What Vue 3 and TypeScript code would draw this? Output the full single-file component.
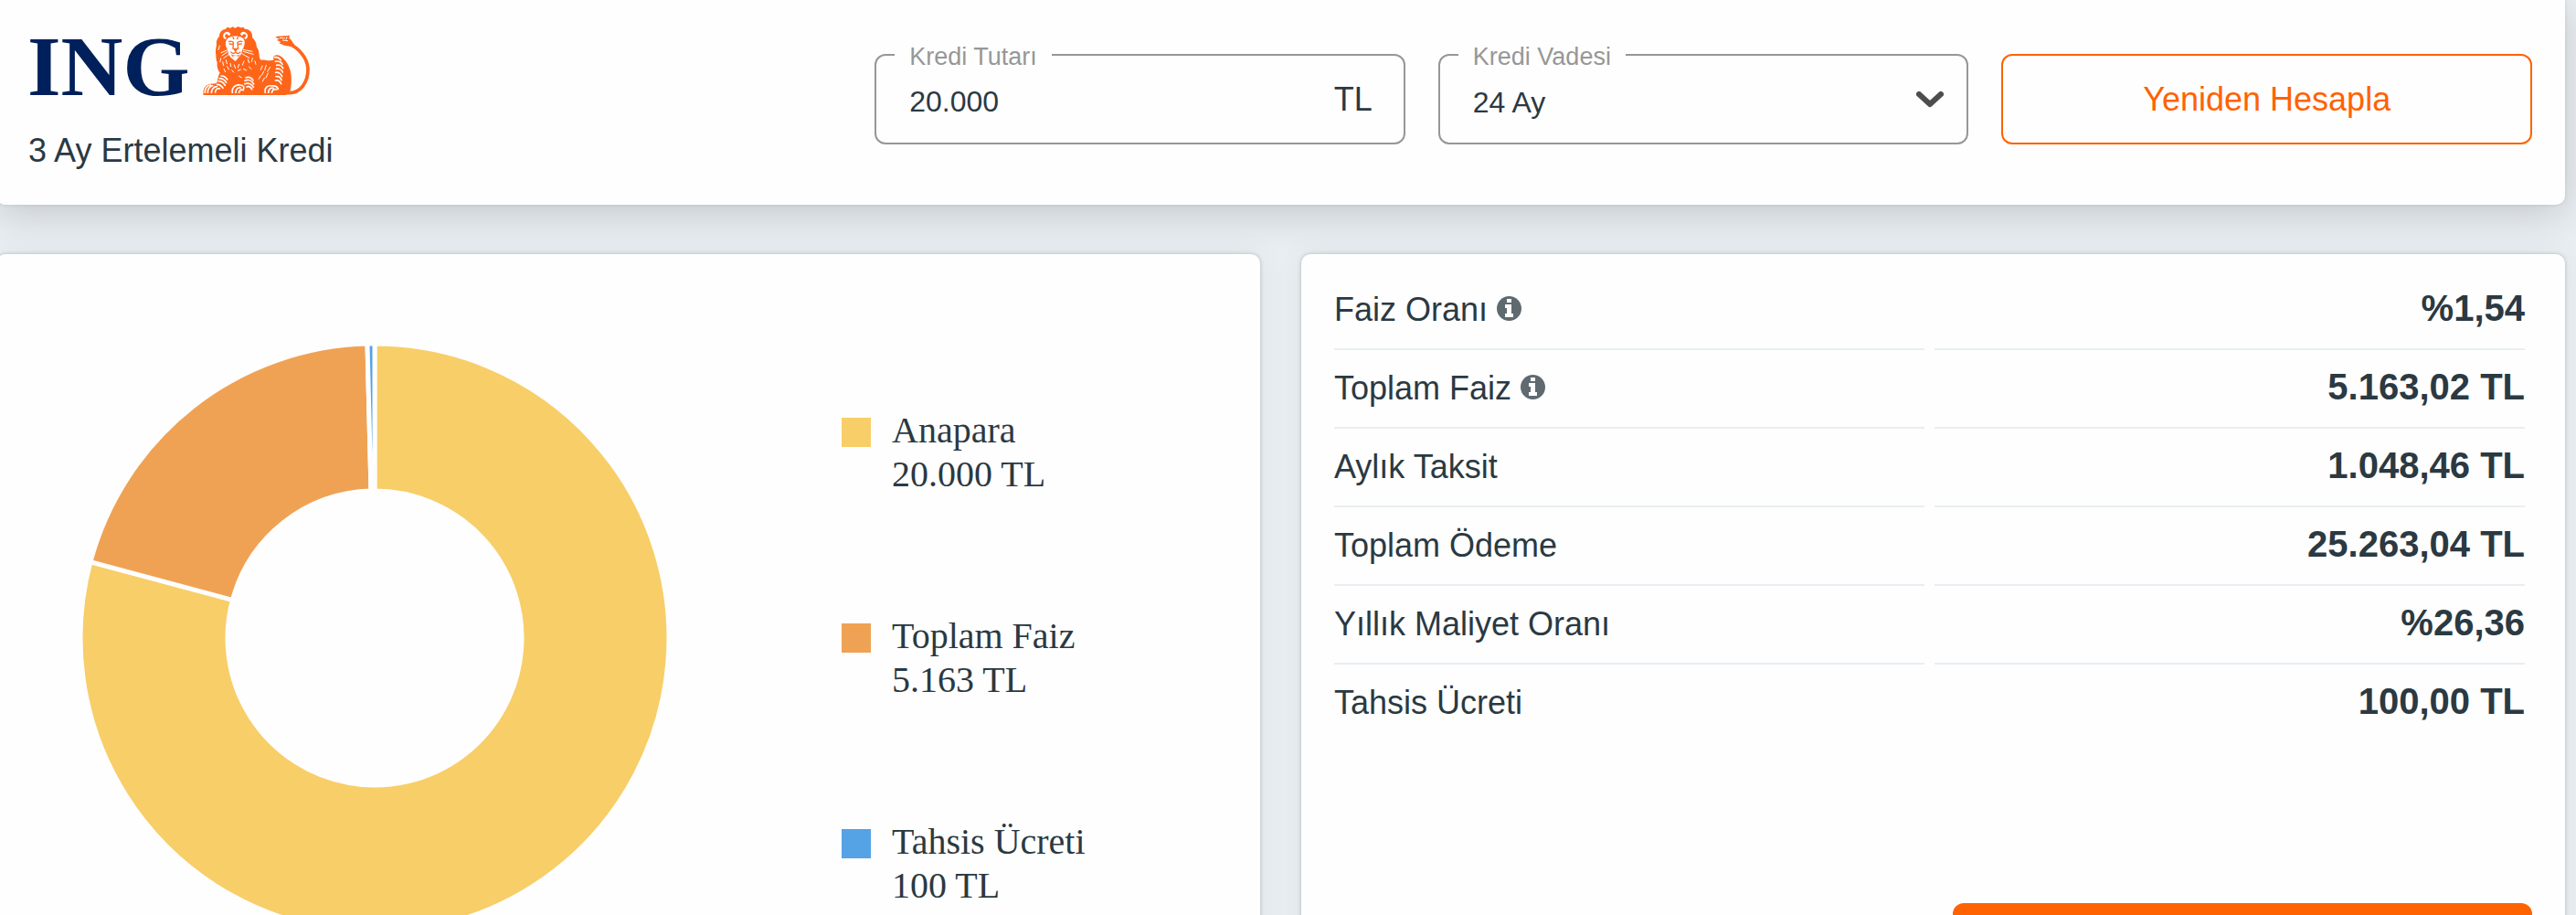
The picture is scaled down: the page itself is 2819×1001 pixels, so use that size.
<script setup lang="ts">
import { computed, ref } from 'vue'

interface Slice {
  name: string
  value: number
  color: string
}

interface Row {
  label: string
  value: string
  info?: boolean
}

const amount = ref('20.000')
const term = ref('24')
const terms = ['12', '24', '36']

const slices: Slice[] = [
  { name: 'Anapara', value: 20000, color: '#f8ce69' },
  { name: 'Toplam Faiz', value: 5163, color: '#f0a254' },
  { name: 'Tahsis Ücreti', value: 100, color: '#55a2e5' },
]

const rows: Row[] = [
  { label: 'Faiz Oranı', value: '%1,54', info: true },
  { label: 'Toplam Faiz', value: '5.163,02 TL', info: true },
  { label: 'Aylık Taksit', value: '1.048,46 TL' },
  { label: 'Toplam Ödeme', value: '25.263,04 TL' },
  { label: 'Yıllık Maliyet Oranı', value: '%26,36' },
  { label: 'Tahsis Ücreti', value: '100,00 TL' },
]

const OUTER = 322
const INNER = 161

function point(radius: number, turn: number): string {
  const a = turn * 2 * Math.PI
  return `${(radius * Math.sin(a)).toFixed(2)} ${(-radius * Math.cos(a)).toFixed(2)}`
}

const arcs = computed(() => {
  const total = slices.reduce((sum, s) => sum + s.value, 0)
  let start = 0
  return slices.map((s) => {
    const end = start + s.value / total
    const large = end - start > 0.5 ? 1 : 0
    const d =
      `M${point(OUTER, start)}A${OUTER} ${OUTER} 0 ${large} 1 ${point(OUTER, end)}` +
      `L${point(INNER, end)}A${INNER} ${INNER} 0 ${large} 0 ${point(INNER, start)}Z`
    start = end
    return { d, color: s.color }
  })
})

function money(value: number): string {
  return String(value).replace(/\B(?=(\d{3})+$)/g, '.') + ' TL'
}
</script>

<template>
  <div class="page">
    <header class="panel top">
      <div class="brand">
        <svg class="logo" viewBox="0 0 309 76" role="img" aria-label="ING">
          <text class="wordmark" x="-1" y="76">ING</text>
          <g transform="translate(179 -13) scale(.33333)">
            <path class="o" d="M38 266C35 246 46 231 62 230L80 229C86 220 84 206 92 194C84 184 82 172 83 160C78 150 80 142 79 134C76 122 80 112 81 100C79 90 84 80 90 74C90 62 98 52 110 51L116 44L126 47L134 43L142 47L152 42L160 46L169 44L174 50L182 51C194 56 200 66 198 78C208 86 212 98 213 110C221 118 220 130 222 144L226 152C240 150 256 158 270 151C262 143 270 134 283 136C302 142 318 166 324 190C328 210 327 230 324 244C324 260 316 266 300 266Z" />
            <path class="tail" d="M308 259C358 266 382 222 381 180C379 145 351 113 318 98" />
            <path class="o" d="M274 77C284 70 302 75 321 71L319 80C327 84 329 93 338 103L326 108L304 104L286 97L292 93L278 86L288 83Z" />
            <path class="wl thin" d="M289 79L304 80M298 87L314 89M312 77L309 84" />
            <path class="w" d="M108 62C116 56 126 61 127 69L120 73C119 66 111 64 109 71C107 76 112 79 115 79L109 84C101 81 100 67 108 62ZM177 62C169 56 160 61 159 68L165 73C167 66 174 64 177 70C179 75 174 79 171 79L176 84C185 80 186 67 177 62Z" />
            <path class="w" d="M122 78C134 72 152 72 164 78C175 84 175 98 170 110C164 118 165 124 162 132C158 140 152 144 148 150L143 156L136 151C130 145 125 142 121 134C118 125 119 119 113 110C108 98 111 84 122 78Z" />
            <path class="ol" d="M120 92C126 89 132 90 137 95M149 95C154 90 159 89 166 92M122 99L134 100M152 100L164 99M136 94L135 116M150 94L152 116M134 76L138 84M152 76L148 84M127 125C134 133 140 131 143 126C147 131 153 133 160 125" />
            <path class="o" d="M134 113H153L147 121L143 126L139 121ZM128 133C137 139 149 139 159 133L153 141C148 137 138 137 133 141Z" />
            <path class="wl thin" d="M117 119L96 128M116 126L98 138M122 133L104 146M169 118L198 124M169 124L201 133M164 131L188 145" />
            <path class="wl thin" d="M91 105L87 118M95 147L92 158M101 158L104 170M112 152L115 164M126 163L128 173M139 168L143 179M155 166L151 177M171 156L166 168M184 150L188 161M199 145L196 157M207 156L210 166M116 173L121 183M105 181L110 191M131 185L137 192M151 187L160 183M169 181L179 186M188 174L194 181M155 205L163 210" />
            <path class="wl" d="M96 204C105 204 112 209 116 216M90 213C100 212 108 218 113 226M87 222C96 221 104 227 109 235M83 232C92 232 98 238 102 244" />
            <path class="wl" d="M177 210C187 205 197 211 201 219M174 220C187 214 198 222 203 231M173 230C187 225 198 232 202 241M180 240C188 237 194 241 197 248" />
            <path class="wl" d="M271 143C280 142 289 147 292 153M274 157C283 154 294 159 297 166M278 169C287 167 296 171 299 179M277 181C286 179 295 184 298 192M275 193C284 191 293 197 296 206M276 206C285 205 292 210 294 218M274 219C282 218 290 223 293 230" />
            <path class="wl thin" d="M231 171L226 184M244 169L239 185M257 175L248 190M236 190L229 202M250 195L243 210M226 203L220 214M238 211L232 222" />
            <path class="wl" d="M43 260C42 246 50 235 61 234M52 259C51 248 59 238 68 236M64 260C64 249 72 239 82 239M77 258C78 248 82 244 91 246M133 260C130 243 142 232 158 234C169 234 174 242 168 250M144 261C143 249 150 241 160 243M154 262C155 252 160 247 169 251M241 259C237 243 249 234 261 237C272 235 280 239 283 247M251 260C251 249 257 242 267 244M262 260C264 250 269 246 278 249" />
            <path class="o" d="M38 261H310V267H38Z" />
          </g>
        </svg>
        <div class="product">3 Ay Ertelemeli Kredi</div>
      </div>

      <div class="field">
        <label for="amount">Kredi Tutarı</label>
        <input id="amount" v-model="amount" type="text" inputmode="numeric" />
        <span class="unit">TL</span>
      </div>

      <div class="field">
        <label for="term">Kredi Vadesi</label>
        <select id="term" v-model="term">
          <option v-for="t in terms" :key="t" :value="t">{{ t }} Ay</option>
        </select>
        <svg class="chevron" viewBox="0 0 30 18" aria-hidden="true">
          <path d="M3 3L15 14L27 3" />
        </svg>
      </div>

      <button class="recalc" type="button">Yeniden Hesapla</button>
    </header>

    <main class="panels">
      <section class="panel chart">
        <svg class="donut" viewBox="-324 -324 648 648" aria-hidden="true">
          <path v-for="arc in arcs" :key="arc.color" :d="arc.d" :fill="arc.color" stroke="#fefefe" stroke-width="5" />
        </svg>
        <ul class="legend">
          <li v-for="s in slices" :key="s.name">
            <span class="swatch" :style="{ background: s.color }"></span>
            <span>{{ s.name }}<br />{{ money(s.value) }}</span>
          </li>
        </ul>
      </section>

      <section class="panel details">
        <table>
          <tbody>
            <tr v-for="row in rows" :key="row.label">
              <th scope="row">
                {{ row.label }}
                <svg v-if="row.info" class="info" viewBox="0 0 27 27" aria-hidden="true">
                  <circle cx="13.5" cy="13.5" r="13.5" fill="#5f6a70" />
                  <path fill="#fefefe" d="M11 3H16V7H11ZM9 9H16V19H18V23H9V19H11V13H9Z" />
                </svg>
              </th>
              <td>{{ row.value }}</td>
            </tr>
          </tbody>
        </table>
        <button class="apply" type="button" aria-label="Başvur"></button>
      </section>
    </main>
  </div>
</template>

<style>
body {
  margin: 0;
  background: #e9eef2;
}
</style>

<style scoped>
.page {
  box-sizing: border-box;
  display: flex;
  flex-direction: column;
  gap: 54px;
  height: 100vh;
  padding-right: 12px;
  overflow: hidden;
  background: #e9eef2;
  color: #2b3942;
  font-family: 'Liberation Sans', Arial, sans-serif;
  font-size: 36px;
  line-height: 44px;
}

.panel {
  background: #fefefe;
  border-radius: 10px;
  box-shadow: 0 0 4px rgba(0, 0, 0, 0.22), 0 0 36px rgba(0, 0, 0, 0.05);
}

.top {
  display: grid;
  grid-template-columns: 46fr 30fr 30fr 30fr;
  gap: 36px;
  flex: none;
  margin-left: -4px;
  padding: 28px 36px 37px 35px;
  border-radius: 0 0 10px 10px;
  box-shadow: 0 0 4px rgba(0, 0, 0, 0.1), 0 10px 44px rgba(0, 0, 0, 0.16);
}

.logo {
  display: block;
  width: 309px;
  height: 76px;
  margin-bottom: 39px;
  overflow: visible;
}

.wordmark {
  fill: #00205b;
  font-family: 'Liberation Serif', 'Times New Roman', serif;
  font-size: 94px;
  font-weight: 700;
}

.o {
  fill: #ff6519;
}

.tail {
  fill: none;
  stroke: #ff6519;
  stroke-width: 11;
}

.w {
  fill: #fefefe;
}

.ol {
  fill: none;
  stroke: #ff6519;
  stroke-width: 4;
}

.wl {
  fill: none;
  stroke: #fefefe;
  stroke-width: 5;
  stroke-linecap: round;
}

.thin {
  stroke-width: 3;
}

.field,
.recalc {
  box-sizing: border-box;
  height: 99px;
  margin: 31px 0 0;
  border: 2px solid #979797;
  border-radius: 12px;
  background: #fefefe;
}

.field {
  position: relative;
  display: flex;
  align-items: center;
  padding: 0 34px 0 36px;
}

.field label {
  position: absolute;
  top: -14px;
  left: 20px;
  padding: 0 16px;
  background: #fefefe;
  color: #979797;
  font-size: 27px;
  line-height: 30px;
}

.field input,
.field select {
  flex: 1;
  min-width: 0;
  height: 95px;
  padding: 6px 0 0;
  border: 0;
  outline: 0;
  appearance: none;
  background: transparent;
  color: inherit;
  font-family: inherit;
  font-size: 32px;
}

.chevron {
  width: 30px;
  height: 18px;
  margin-right: -9px;
  fill: none;
  stroke: #4d4d4d;
  stroke-width: 6;
  stroke-linecap: round;
  stroke-linejoin: round;
  pointer-events: none;
}

.recalc {
  border-color: #ff6200;
  color: #ff6200;
  font: inherit;
}

.panels {
  display: grid;
  grid-template-columns: 1fr 1fr;
  gap: 45px;
  flex: 1 0 auto;
  margin-left: -4px;
}

.chart {
  display: flex;
  align-items: flex-start;
  padding: 96px 93px 0 90px;
}

.donut {
  flex: 0 1 648px;
  min-width: 0;
}

.legend {
  display: flex;
  flex-direction: column;
  gap: 129px;
  margin: 73px 0 0 187px;
  padding: 0;
  list-style: none;
  font-family: 'Liberation Serif', 'Times New Roman', serif;
  font-size: 40px;
  line-height: 48px;
  white-space: nowrap;
}

.legend li {
  display: flex;
  gap: 23px;
}

.swatch {
  width: 32px;
  height: 32px;
  margin-top: 10px;
}

.details {
  display: flex;
  flex-direction: column;
  padding: 19px 36px 36px;
}

table {
  width: calc(100% + 14px);
  margin: 0 -3px 0 -11px;
  border-spacing: 11px 0;
  table-layout: fixed;
}

th,
td {
  box-sizing: border-box;
  height: 86px;
  padding: 18px 0 0;
  border-bottom: 2px solid #e9eef2;
  vertical-align: baseline;
}

tr:last-child th,
tr:last-child td {
  border-bottom-color: transparent;
}

th {
  font-weight: 400;
  text-align: left;
}

td {
  font-size: 40px;
  font-weight: 700;
  text-align: right;
}

.info {
  width: 27px;
  height: 27px;
}

.apply {
  align-self: flex-end;
  width: calc(50% - 21px);
  height: 99px;
  margin: 175px 0 0;
  border: 0;
  border-radius: 12px;
  background: #ff6200;
}
</style>
